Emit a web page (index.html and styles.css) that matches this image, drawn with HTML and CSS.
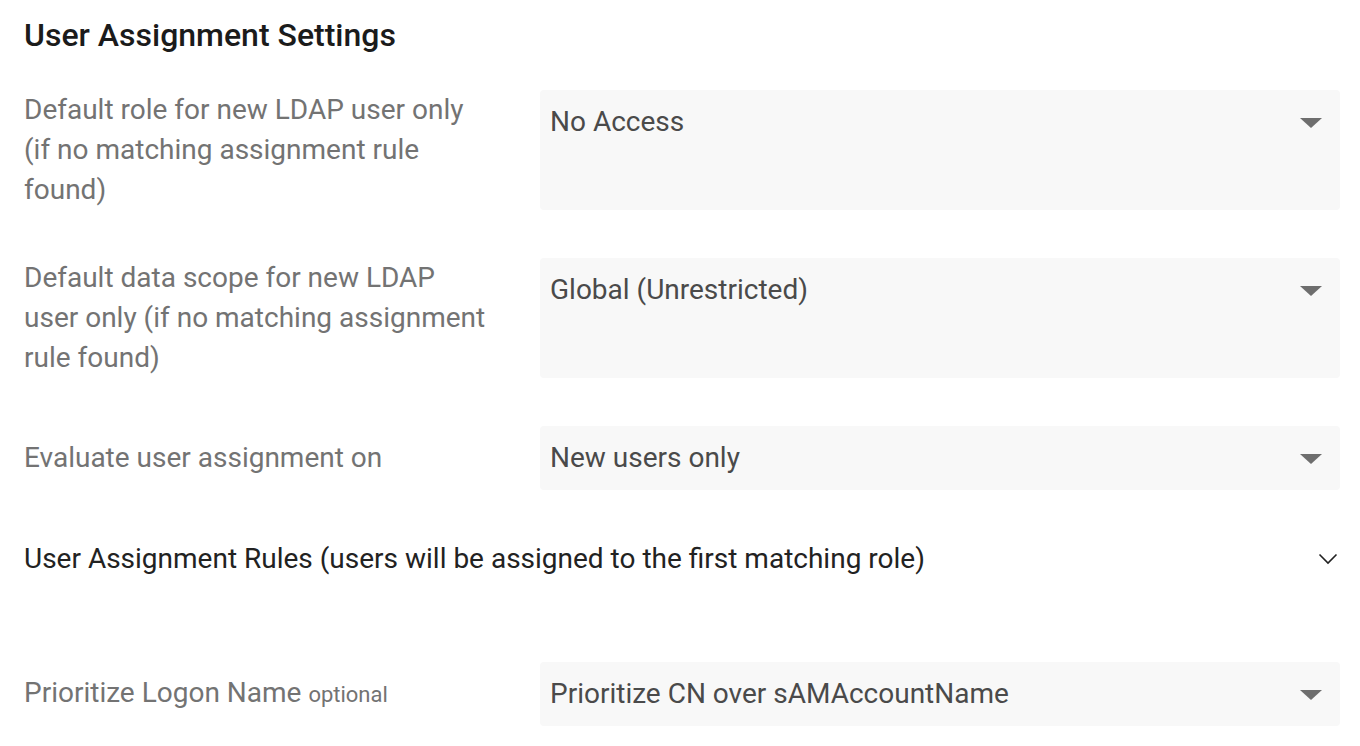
FILE: index.html
```html
<!DOCTYPE html>
<html>
<head>
<meta charset="utf-8">
<link rel="stylesheet" href="styles.css">
</head>
<body>
<div class="page">
  <h2 class="title">User Assignment Settings</h2>
  <div class="rows">
    <div class="row">
      <div class="label">Default role for new LDAP user only (if no matching assignment rule found)</div>
      <div class="select tall"><span class="value">No Access</span><span class="caret"></span></div>
    </div>
    <div class="row">
      <div class="label">Default data scope for new LDAP user only (if no matching assignment rule found)</div>
      <div class="select tall"><span class="value">Global (Unrestricted)</span><span class="caret"></span></div>
    </div>
    <div class="row">
      <div class="label">Evaluate user assignment on</div>
      <div class="select"><span class="value">New users only</span><span class="caret"></span></div>
    </div>
  </div>
  <div class="section">
    <span>User Assignment Rules (users will be assigned to the first matching role)</span>
    <svg class="chev" width="20" height="12" viewBox="0 0 20 12"><path d="M1.5 1.5 L10 10 L18.5 1.5" fill="none" stroke="#222" stroke-width="1.6"/></svg>
  </div>
  <div class="row last">
    <div class="label">Prioritize Logon Name <span class="opt">optional</span></div>
    <div class="select"><span class="value">Prioritize CN over sAMAccountName</span><span class="caret"></span></div>
  </div>
</div>
</body>
</html>
```
FILE: styles.css
```css
html, body {
  margin: 0;
  padding: 0;
  background: #fff;
}
body {
  font-family: Roboto, "Liberation Sans", sans-serif;
}
.page {
  padding: 15px 20px 0 24px;
}
.title {
  margin: 0;
  font-size: 32px;
  font-weight: 500;
  line-height: 40px;
  color: #1b1b1b;
}
.rows {
  margin-top: 35px;
  display: flex;
  flex-direction: column;
  gap: 48px;
}
.row {
  display: flex;
  align-items: center;
  gap: 48px;
}
.label {
  width: 468px;
  flex: none;
  font-size: 28px;
  line-height: 40px;
  color: #737373;
}
.opt {
  font-size: 22px;
}
.select {
  flex: 1;
  background: #f8f8f8;
  border-radius: 4px;
  padding: 12px 18px 12px 10px;
  display: flex;
  align-items: flex-start;
  justify-content: space-between;
  box-sizing: border-box;
}
.select.tall {
  min-height: 120px;
}
.value {
  font-size: 28px;
  line-height: 40px;
  color: #4a4a4a;
}
.caret {
  width: 0;
  height: 0;
  margin-top: 16px;
  border-left: 11px solid transparent;
  border-right: 11px solid transparent;
  border-top: 10px solid #6e6e6e;
}
.section {
  margin-top: 49px;
  display: flex;
  align-items: center;
  justify-content: space-between;
  font-size: 28px;
  line-height: 40px;
  color: #222;
}
.chev {
  margin-right: 2px;
}
.row.last {
  margin-top: 83px;
}
```
